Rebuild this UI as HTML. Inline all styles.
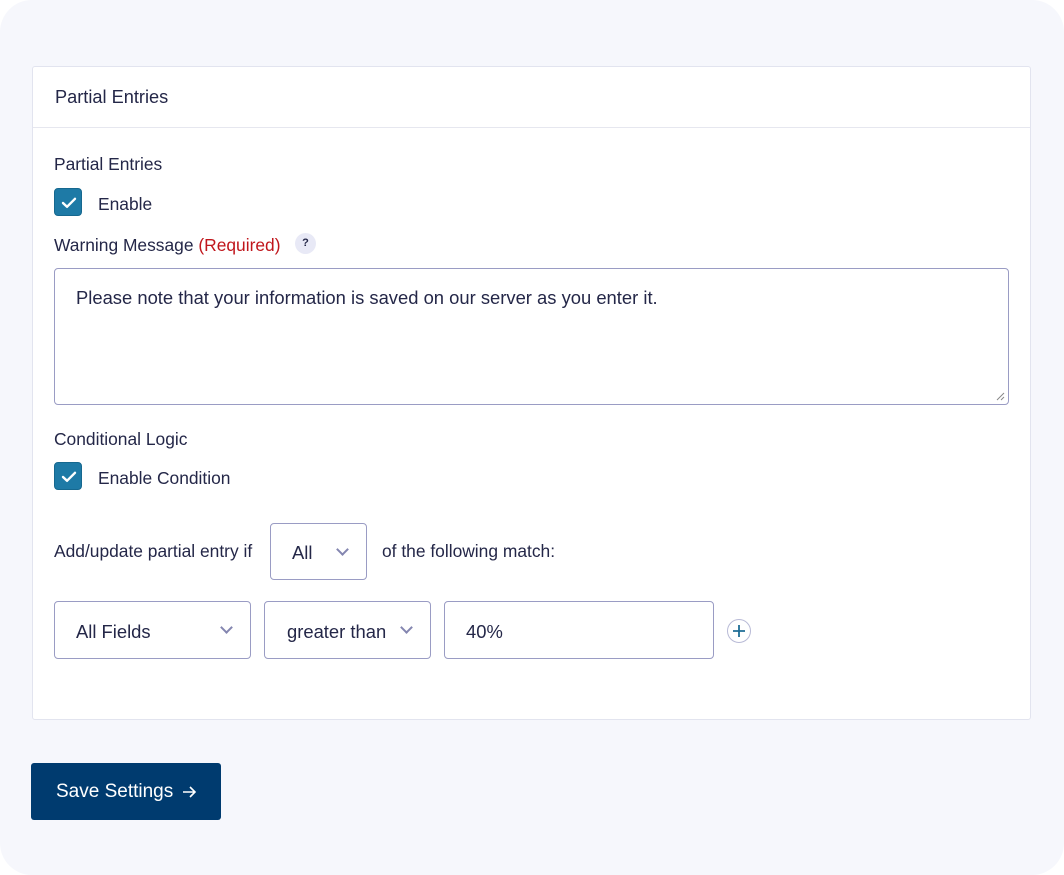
<!DOCTYPE html>
<html><head><style>
*{box-sizing:border-box;margin:0;padding:0}
body{width:1064px;height:875px;background:#fff;font-family:"Liberation Sans",sans-serif;color:#242748;position:relative;overflow:hidden}
.bg{position:absolute;left:0;top:0;width:1064px;height:875px;background:#f6f7fc;border-radius:32px}
.a{position:absolute}
.card{left:32px;top:66px;width:999px;height:654px;background:#fff;border:1px solid #e2e4ef;border-radius:3px}
.t{font-size:17.4px;white-space:nowrap}
.f{font-size:18.4px}
.cb{width:28px;height:28px;background:#1e7aa6;border-radius:4px;border:1px solid #16688f}
.box{border:1px solid #9a9cc4;border-radius:4px;background:#fff}
.chev{position:absolute;width:9px;height:9px;border-right:2px solid #8486b0;border-bottom:2px solid #8486b0;transform:rotate(45deg)}
</style></head><body>
<div class="bg"></div>
<div class="a card"></div>
<div class="a" style="left:33px;top:127px;width:997px;height:1px;background:#e6e7ef"></div>
<div class="a t" style="left:55px;top:87px;font-size:18.2px">Partial Entries</div>
<div class="a t" style="left:54px;top:154px">Partial Entries</div>
<div class="a cb" style="left:54px;top:188px"><svg width="28" height="28" viewBox="0 0 28 28"><path d="M8 14l4 3.8 8-8" fill="none" stroke="#fff" stroke-width="2.4" stroke-linecap="round" stroke-linejoin="round"/></svg></div>
<div class="a t" style="left:98px;top:194px">Enable</div>
<div class="a t" style="left:54px;top:235px">Warning Message <span style="color:#c0161c">(Required)</span></div>
<div class="a" style="left:295px;top:233px;width:21px;height:21px;border-radius:50%;background:#e8e9f6;font-size:11px;font-weight:bold;text-align:center;line-height:21px">?</div>
<div class="a box" style="left:54px;top:268px;width:955px;height:137px"></div>
<div class="a t f" style="left:76px;top:287px">Please note that your information is saved on our server as you enter it.</div>
<svg class="a" style="left:995px;top:391px" width="10" height="10"><path d="M2 9L9 2M6 9L9 6" stroke="#888" stroke-width="1"/></svg>
<div class="a t" style="left:54px;top:429px">Conditional Logic</div>
<div class="a cb" style="left:54px;top:462px"><svg width="28" height="28" viewBox="0 0 28 28"><path d="M8 14l4 3.8 8-8" fill="none" stroke="#fff" stroke-width="2.4" stroke-linecap="round" stroke-linejoin="round"/></svg></div>
<div class="a t" style="left:98px;top:468px">Enable Condition</div>
<div class="a t" style="left:54px;top:541px">Add/update partial entry if</div>
<div class="a box" style="left:270px;top:523px;width:97px;height:57px"><span class="a t f" style="left:21px;top:18px">All</span><div class="chev" style="left:67px;top:21px"></div></div>
<div class="a t" style="left:382px;top:541px">of the following match:</div>
<div class="a box" style="left:54px;top:601px;width:197px;height:58px"><span class="a t f" style="left:21px;top:19px">All Fields</span><div class="chev" style="left:167px;top:21px"></div></div>
<div class="a box" style="left:264px;top:601px;width:167px;height:58px"><span class="a t f" style="left:22px;top:19px">greater than</span><div class="chev" style="left:137px;top:21px"></div></div>
<div class="a box" style="left:444px;top:601px;width:270px;height:58px"><span class="a t f" style="left:21px;top:19px">40%</span></div>
<div class="a" style="left:727px;top:619px;width:24px;height:24px;border:1px solid #b8bad6;border-radius:50%"><svg width="22" height="22"><path d="M11 5v12M5 11h12" stroke="#1e6d96" stroke-width="1.8"/></svg></div>
<div class="a" style="left:31px;top:763px;width:190px;height:57px;background:#003b6f;border-radius:3px"></div>
<div class="a t" style="left:56px;top:781px;color:#fff;font-size:19px">Save Settings</div>
<svg class="a" style="left:180px;top:783px" width="18" height="18"><path d="M3 9h12M10 4l5 5-5 5" fill="none" stroke="#fff" stroke-width="1.6"/></svg>
</body></html>
